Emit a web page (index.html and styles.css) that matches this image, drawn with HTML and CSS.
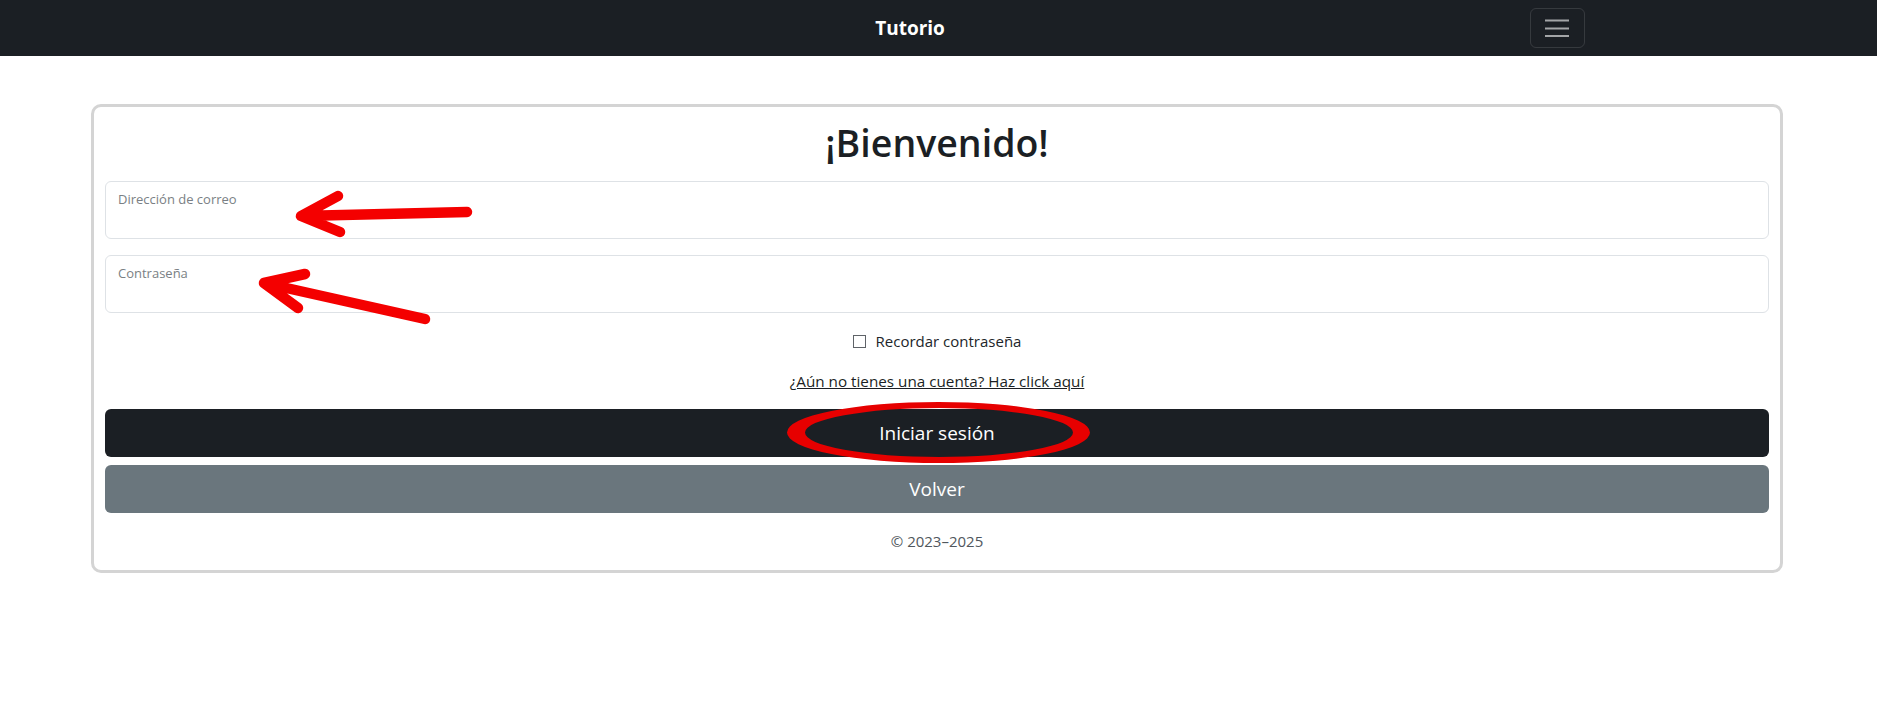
FILE: index.html
```html
<!DOCTYPE html>
<html lang="es">
<head>
<meta charset="utf-8">
<title>Tutorio</title>
<link rel="stylesheet" href="styles.css">
</head>
<body>
<nav class="navbar">
  <div class="navbar-inner">
    <a class="brand" href="#">Tutorio</a>
    <button class="toggler" type="button" aria-label="Menú">
      <svg width="24" height="18" viewBox="0 0 24 18"><path d="M0 1.5h24M0 9.5h24M0 17h24" stroke="rgba(255,255,255,0.6)" stroke-width="2" fill="none"/></svg>
    </button>
  </div>
</nav>

<main class="card">
  <h1 class="title">¡Bienvenido!</h1>
  <div class="field">
    <input class="field-input" type="email" id="email">
    <label class="field-label" for="email">Dirección de correo</label>
  </div>
  <div class="field">
    <input class="field-input" type="password" id="pass">
    <label class="field-label" for="pass">Contraseña</label>
  </div>
  <div class="remember">
    <input type="checkbox" id="remember" class="check">
    <label for="remember">Recordar contraseña</label>
  </div>
  <div class="signup"><a href="#">¿Aún no tienes una cuenta? Haz click aquí</a></div>
  <button class="btn btn-dark" type="button">Iniciar sesión</button>
  <button class="btn btn-secondary" type="button">Volver</button>
  <p class="copy">© 2023–2025</p>
</main>

<svg class="annotations" width="1877" height="716" viewBox="0 0 1877 716">
  <g stroke="#f40000" stroke-width="10.5" stroke-linecap="round" stroke-linejoin="round" fill="none">
    <path d="M467 212 L301 216 M338 196 L301 216 L340 232"/>
    <path d="M425 319 L264 283 M305 274 L264 283 L298 308"/>
  </g>
  <path fill="#e60000" fill-rule="evenodd" d="M787 432.5 a151.5 30.5 0 1 0 303 0 a151.5 30.5 0 1 0 -303 0 Z M805 432.5 a134 24.5 0 1 0 268 0 a134 24.5 0 1 0 -268 0 Z"/>
</svg>
</body>
</html>
```
FILE: styles.css
```css
* { box-sizing: border-box; }

html, body {
  margin: 0;
  padding: 0;
  background: #fff;
  font-family: "Open Sans", "Noto Sans", "Liberation Sans", sans-serif;
  color: #212529;
}

body { position: relative; min-height: 716px; }

.navbar {
  height: 56px;
  background: #1b1f24;
  display: flex;
  align-items: center;
}

.navbar-inner {
  width: 1296px;
  margin: 0 auto;
  display: flex;
  align-items: center;
  padding-right: 2px;
}

.brand {
  flex: 1;
  text-align: center;
  color: #fff;
  font-weight: 700;
  font-size: 19px;
  text-decoration: none;
  line-height: 28px;
}

.toggler {
  width: 55px;
  height: 40px;
  background: transparent;
  border: 1px solid rgba(255, 255, 255, 0.12);
  border-radius: 6px;
  display: flex;
  align-items: center;
  justify-content: center;
  padding: 0;
}

.card {
  display: block;
  margin: 48px 94px 0 91px;
  border: 3px solid #d4d4d4;
  border-radius: 10px;
  padding: 13px 11px 17px;
}

.title {
  margin: 0 0 16px;
  text-align: center;
  font-size: 37.5px;
  line-height: 45px;
  font-weight: 600;
  color: #1b1f24;
}

.field {
  position: relative;
  height: 58px;
  margin-bottom: 16px;
}

.field-input {
  display: block;
  width: 100%;
  height: 58px;
  border: 1px solid #dee2e6;
  border-radius: 6px;
  background: #fff;
  outline: none;
  padding: 0;
}

.field-label {
  position: absolute;
  top: 10px;
  left: 13px;
  font-size: 13px;
  line-height: 16px;
  color: #7a7f84;
}

.remember {
  display: flex;
  align-items: center;
  justify-content: center;
  height: 24px;
  font-size: 15px;
}

.check {
  appearance: none;
  -webkit-appearance: none;
  width: 13px;
  height: 13px;
  margin: 0 10px 0 0;
  border: 1px solid #5f6368;
  border-radius: 0;
  background: #fff;
}

.signup {
  margin-top: 16px;
  text-align: center;
  font-size: 15.25px;
  line-height: 24px;
}

.signup a {
  color: #1b1f24;
  text-decoration: underline;
}

.btn {
  display: block;
  width: 100%;
  height: 48px;
  border: 0;
  border-radius: 6px;
  color: #fff;
  font-family: inherit;
  font-size: 19px;
  line-height: 30px;
  padding: 0;
}

.btn-dark {
  margin-top: 16px;
  background: #1b1f24;
}

.btn-secondary {
  margin-top: 8px;
  background: #6a767d;
}

.copy {
  margin: 16px 0 0;
  text-align: center;
  font-size: 15px;
  line-height: 24px;
  color: #50575d;
}

.annotations {
  position: absolute;
  top: 0;
  left: 0;
  pointer-events: none;
}
```
